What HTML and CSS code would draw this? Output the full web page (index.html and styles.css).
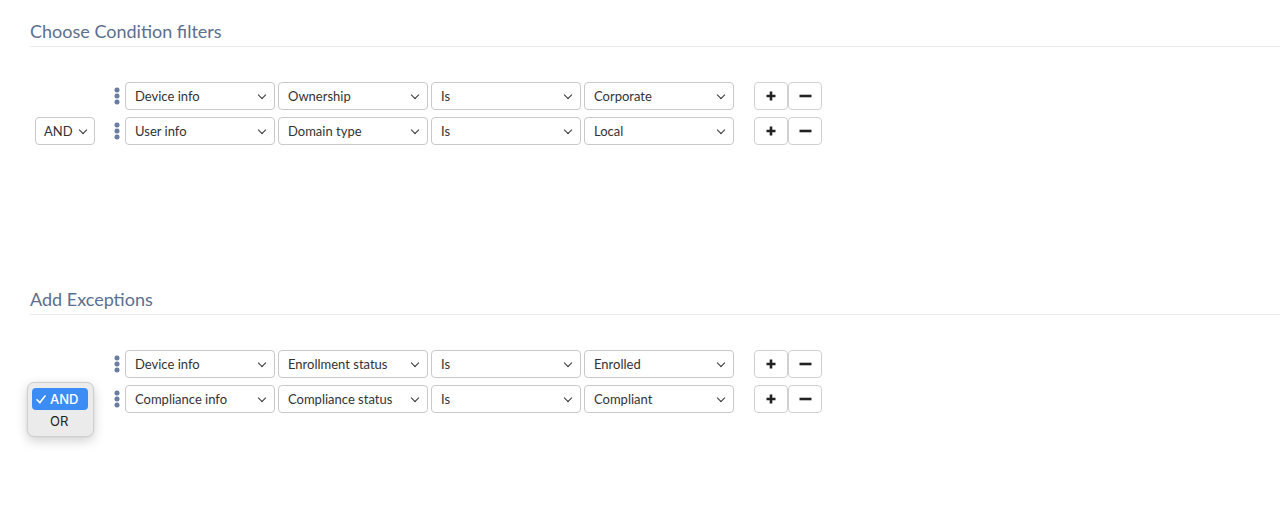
FILE: index.html
```html
<!DOCTYPE html>
<html lang="en">
<head>
<meta charset="utf-8">
<title>Conditions</title>
<link rel="stylesheet" href="styles.css">
</head>
<body>
<div class="page">
  <section class="section">
    <h2 class="section-title">Choose Condition filters</h2>
    <div class="rows">
      <div class="row">
        <div class="connector"></div>
        <span class="handle"><svg width="6" height="18" viewBox="0 0 6 18"><rect x="0.5" y="0.5" width="5" height="5" rx="2.3"/><rect x="0.5" y="6.5" width="5" height="5" rx="2.3"/><rect x="0.5" y="12.5" width="5" height="5" rx="2.3"/></svg></span>
        <div class="fields">
          <div class="select">Device info</div>
          <div class="select">Ownership</div>
          <div class="select">Is</div>
          <div class="select">Corporate</div>
        </div>
        <div class="btns">
          <button class="btn"><svg width="10" height="10" viewBox="0 0 10 10"><path d="M5 0.5v9M0.5 5h9"/></svg></button>
          <button class="btn"><svg width="13" height="10" viewBox="0 0 13 10"><path d="M0.5 5h12"/></svg></button>
        </div>
      </div>
      <div class="row">
        <div class="connector"><div class="select small">AND</div></div>
        <span class="handle"><svg width="6" height="18" viewBox="0 0 6 18"><rect x="0.5" y="0.5" width="5" height="5" rx="2.3"/><rect x="0.5" y="6.5" width="5" height="5" rx="2.3"/><rect x="0.5" y="12.5" width="5" height="5" rx="2.3"/></svg></span>
        <div class="fields">
          <div class="select">User info</div>
          <div class="select">Domain type</div>
          <div class="select">Is</div>
          <div class="select">Local</div>
        </div>
        <div class="btns">
          <button class="btn"><svg width="10" height="10" viewBox="0 0 10 10"><path d="M5 0.5v9M0.5 5h9"/></svg></button>
          <button class="btn"><svg width="13" height="10" viewBox="0 0 13 10"><path d="M0.5 5h12"/></svg></button>
        </div>
      </div>
    </div>
  </section>

  <section class="section">
    <h2 class="section-title">Add Exceptions</h2>
    <div class="rows">
      <div class="row">
        <div class="connector"></div>
        <span class="handle"><svg width="6" height="18" viewBox="0 0 6 18"><rect x="0.5" y="0.5" width="5" height="5" rx="2.3"/><rect x="0.5" y="6.5" width="5" height="5" rx="2.3"/><rect x="0.5" y="12.5" width="5" height="5" rx="2.3"/></svg></span>
        <div class="fields">
          <div class="select">Device info</div>
          <div class="select">Enrollment status</div>
          <div class="select">Is</div>
          <div class="select">Enrolled</div>
        </div>
        <div class="btns">
          <button class="btn"><svg width="10" height="10" viewBox="0 0 10 10"><path d="M5 0.5v9M0.5 5h9"/></svg></button>
          <button class="btn"><svg width="13" height="10" viewBox="0 0 13 10"><path d="M0.5 5h12"/></svg></button>
        </div>
      </div>
      <div class="row">
        <div class="connector">
          <div class="select small open">AND</div>
          <div class="menu">
            <div class="menu-item active"><span class="check"><svg width="10" height="9" viewBox="0 0 10 9"><path d="M1 4.8l2.8 3L9 1"/></svg></span><span>AND</span></div>
            <div class="menu-item"><span class="check"></span><span>OR</span></div>
          </div>
        </div>
        <span class="handle"><svg width="6" height="18" viewBox="0 0 6 18"><rect x="0.5" y="0.5" width="5" height="5" rx="2.3"/><rect x="0.5" y="6.5" width="5" height="5" rx="2.3"/><rect x="0.5" y="12.5" width="5" height="5" rx="2.3"/></svg></span>
        <div class="fields">
          <div class="select">Compliance info</div>
          <div class="select">Compliance status</div>
          <div class="select">Is</div>
          <div class="select">Compliant</div>
        </div>
        <div class="btns">
          <button class="btn"><svg width="10" height="10" viewBox="0 0 10 10"><path d="M5 0.5v9M0.5 5h9"/></svg></button>
          <button class="btn"><svg width="13" height="10" viewBox="0 0 13 10"><path d="M0.5 5h12"/></svg></button>
        </div>
      </div>
    </div>
  </section>
</div>
</body>
</html>
```

FILE: styles.css
```css
* { box-sizing: border-box; }

html, body {
  margin: 0;
  padding: 0;
  background: #ffffff;
  font-family: Lato, "Open Sans", sans-serif;
  color: #333333;
}

.page {
  padding: 0 8px 0 30px;
}

.section {
  height: 268px;
  padding-top: 20px;
}

.section-title {
  margin: 0;
  font-size: 18px;
  line-height: 22px;
  font-weight: 400;
  color: #5b6f90;
  padding-bottom: 4px;
  border-bottom: 1px solid #ececec;
}

.rows {
  margin-top: 35px;
  display: flex;
  flex-direction: column;
  gap: 7px;
}

.row {
  display: flex;
  align-items: center;
  height: 28px;
}

.connector {
  position: relative;
  width: 60px;
  height: 28px;
  margin-left: 5px;
  flex: none;
}

.handle {
  display: flex;
  margin-left: 19px;
  width: 6px;
  height: 18px;
  flex: none;
}

.handle svg { fill: #6a7ea2; }

.fields {
  display: flex;
  gap: 3px;
  margin-left: 5px;
}

.select {
  position: relative;
  width: 150px;
  height: 28px;
  border: 1px solid #c9c9c9;
  border-radius: 4px;
  background: #ffffff;
  font-size: 13px;
  line-height: 26px;
  padding-left: 9px;
  color: #333333;
  white-space: nowrap;
}

.select::after {
  content: "";
  position: absolute;
  right: 9px;
  top: 9px;
  width: 5px;
  height: 5px;
  border-right: 1.8px solid #333;
  border-bottom: 1.8px solid #333;
  transform: rotate(45deg);
}

.select.small {
  width: 60px;
  padding-left: 8px;
}

.select.small::after { right: 8px; }

.select.open { visibility: hidden; }

.btns {
  display: flex;
  margin-left: 20px;
}

.btn {
  width: 34px;
  height: 28px;
  padding: 0;
  border: 1px solid #d0d0d0;
  border-radius: 4px;
  background: #ffffff;
  display: flex;
  align-items: center;
  justify-content: center;
}

.btn svg path {
  stroke: #222222;
  stroke-width: 2.6;
  fill: none;
}

.menu {
  position: absolute;
  left: -8px;
  top: -3px;
  width: 67px;
  height: 55px;
  padding: 5px 5px 5px 4px;
  background: #ebebeb;
  border: 1px solid #cfcfcf;
  border-radius: 7px;
  box-shadow: 0 4px 12px rgba(0, 0, 0, 0.18), 0 0 2px rgba(0, 0, 0, 0.08);
  font-family: Inter, "Noto Sans", sans-serif;
  font-size: 13px;
}

.menu-item {
  display: flex;
  align-items: center;
  height: 22px;
  padding-left: 4px;
  color: #222;
  border-radius: 4px;
}

.menu-item.active {
  background: #3c8cf6;
  color: #ffffff;
  font-weight: 500;
}

.check {
  display: flex;
  align-items: center;
  width: 14px;
  flex: none;
}

.check svg path {
  stroke: #ffffff;
  stroke-width: 1.6;
  fill: none;
  stroke-linecap: round;
  stroke-linejoin: round;
}
```
